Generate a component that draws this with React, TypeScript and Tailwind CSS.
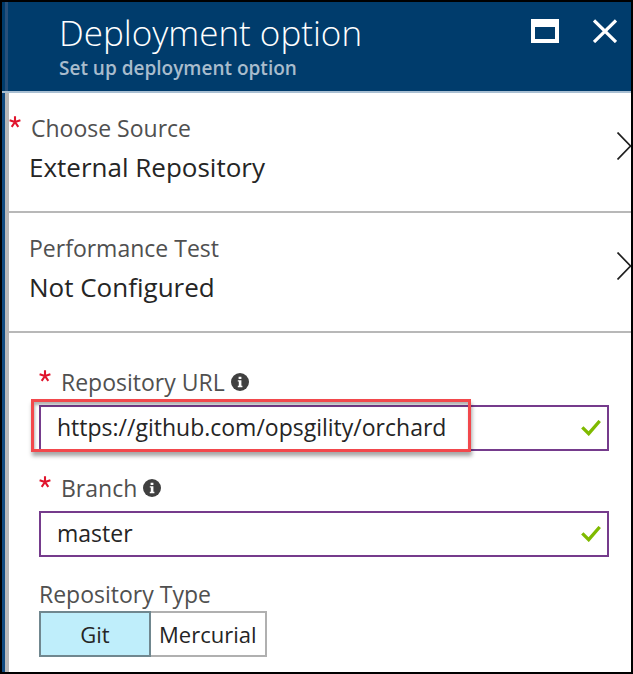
import { useState } from "react";

function InfoIcon() {
  return (
    <svg className="size-[18px] shrink-0" viewBox="0 0 18 18" aria-hidden="true">
      <circle cx="9" cy="9" r="9" fill="#404040" />
      <path d="M7.600 3.800h2.800v2.200H7.600zM6.800 7.200h3.600v5.600h1v1.400H6.800v-1.400h1V8.600h-1z" fill="#fff" />
    </svg>
  );
}

function Asterisk() {
  return (
    <span className="flex h-6 w-[22px] shrink-0">
      <svg className="size-3 shrink-0" viewBox="0 0 12 12" aria-hidden="true">
        <path
          d="M6 6V0.300M6 6L0.600 4.300M6 6L11.400 4.300M6 6L2.700 10.800M6 6L9.300 10.800"
          stroke="#e0142c"
          strokeWidth="2.100"
          fill="none"
        />
      </svg>
    </span>
  );
}

function SettingRow({ label, value, required }: { label: string; value: string; required?: boolean }) {
  return (
    <button type="button" className="flex h-[120px] w-full items-start border-b-2 border-[#b8b8b8] text-left">
      <span className="flex min-w-0 flex-1 flex-col pt-[19px]">
        <span className="flex h-8 items-center text-[23px] leading-8 text-[#505050]">
          {required ? <Asterisk /> : <span className="w-5 shrink-0" />}
          {label}
        </span>
        <span className="mt-[3px] pl-5 text-[26px] leading-10 text-[#252525]">{value}</span>
      </span>
      <svg className="mt-[39px] h-7 w-[14px] shrink-0" viewBox="0 0 14 28" aria-hidden="true">
        <path d="M0.500 0.500L13.500 14L0.500 27.500" fill="none" stroke="#202020" strokeWidth="1.700" />
      </svg>
    </button>
  );
}

function TextField({
  id,
  label,
  initial,
  highlighted,
}: {
  id: string;
  label: string;
  initial: string;
  highlighted?: boolean;
}) {
  const [value, setValue] = useState(initial);
  return (
    <div>
      <div className="flex h-8 items-center">
        <Asterisk />
        <label htmlFor={id} className="mr-[6px] text-[23px] leading-8 text-[#505050]">
          {label}
        </label>
        <InfoIcon />
      </div>
      <div className="relative mt-[7px] flex h-[46px] items-center border-2 border-[#753b8c] bg-white pr-[6px] pl-4">
        <input
          id={id}
          type="text"
          value={value}
          onChange={(e) => setValue(e.target.value)}
          className="h-full min-w-0 flex-1 bg-transparent pb-[2px] text-[23px] text-[#252525] outline-none"
        />
        <svg className="h-4 w-5 shrink-0" viewBox="0 0 20 16" aria-hidden="true">
          <path d="M1.300 7.300L7.700 13.700L18.700 1" fill="none" stroke="#7fba00" strokeWidth="3.300" />
        </svg>
        {highlighted && (
          <div className="pointer-events-none absolute -top-2 -left-[10px] h-[53px] w-[440px] border-3 border-[#f2484c] shadow-[1px_4px_4px_rgba(0,0,0,0.35),inset_1px_3px_3px_rgba(0,0,0,0.3)]" />
        )}
      </div>
    </div>
  );
}

function RepositoryType() {
  const [type, setType] = useState("Git");
  return (
    <fieldset>
      <legend className="mb-px text-[23px] leading-8 text-[#505050]">Repository Type</legend>
      <div className="flex text-[22px] text-[#252525]">
        <label className="relative flex h-[46px] w-28 items-center justify-center border-2 border-[#b0b0b0] has-checked:border-[#70878f] has-checked:bg-[#bfeefb]">
          <input
            type="radio"
            name="repository-type"
            className="sr-only"
            checked={type === "Git"}
            onChange={() => setType("Git")}
          />
          Git
        </label>
        <label className="relative flex h-[46px] items-center justify-center border-2 border-l-0 border-[#b0b0b0] px-2 has-checked:border-[#70878f] has-checked:bg-[#bfeefb]">
          <input
            type="radio"
            name="repository-type"
            className="sr-only"
            checked={type === "Mercurial"}
            onChange={() => setType("Mercurial")}
          />
          Mercurial
        </label>
      </div>
    </fieldset>
  );
}

export default function App() {
  return (
    <main className="flex min-h-screen flex-col border-2 border-black bg-white font-['Open_Sans','Noto_Sans',sans-serif]">
      <header className="flex items-start border-b-2 border-[#a9bfd2] bg-[#003c6c] pr-[14px]">
        <div className="h-[89px] w-[6px] shrink-0 border-r-3 border-[#28507a]" />
        <div className="min-w-0 flex-1 pt-2 pl-[51px]">
          <h1 className="text-[35px] leading-[46px] font-light text-white">Deployment option</h1>
          <p className="text-[19px] leading-6 font-semibold text-[#a9bccd]">Set up deployment option</p>
        </div>
        <div className="flex gap-[34px] pt-[17px]">
          <button type="button" aria-label="Maximize">
            <svg className="h-6 w-7" viewBox="0 0 28 24" aria-hidden="true">
              <path d="M0 0H28V24H0ZM4 8V20H24V8Z" fill="#fff" fillRule="evenodd" />
            </svg>
          </button>
          <button type="button" aria-label="Close">
            <svg className="size-6" viewBox="0 0 24 24" aria-hidden="true">
              <path d="M1 1.500L23 23M23 1.500L1 23" stroke="#fff" strokeWidth="3.200" />
            </svg>
          </button>
        </div>
      </header>
      <div className="flex flex-1 border-l-3 border-[#0f4a80]">
        <div className="min-w-0 flex-1 border-l-4 border-[#b8b8b8]">
          <SettingRow label="Choose Source" value="External Repository" required />
          <SettingRow label="Performance Test" value="Not Configured" />
          <form
            className="flex flex-col gap-[21px] pt-[33px] pr-[22px] pb-[15px] pl-[30px]"
            onSubmit={(e) => e.preventDefault()}
          >
            <TextField id="repository-url" label="Repository URL" initial="https://github.com/opsgility/orchard" highlighted />
            <TextField id="branch" label="Branch" initial="master" />
            <RepositoryType />
          </form>
        </div>
      </div>
    </main>
  );
}
